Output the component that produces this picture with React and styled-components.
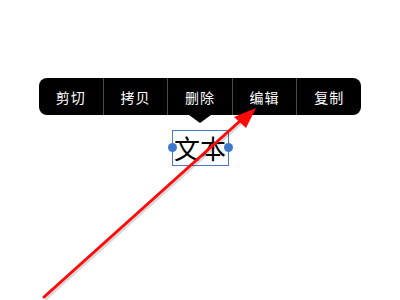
import React from 'react'
import styled, { createGlobalStyle } from 'styled-components'

const Global = createGlobalStyle`
  html, body { margin: 0; padding: 0; background: #fff; }
  body { font-family: "Noto Sans CJK SC", "Noto Sans", sans-serif; }
`

const Page = styled.div`
  position: relative;
  width: 400px;
  height: 300px;
  overflow: hidden;
  display: flex;
  flex-direction: column;
  align-items: center;
  padding-top: 78px;
  box-sizing: border-box;
`

const Menu = styled.div`
  position: relative;
  display: flex;
  width: 322px;
  height: 37px;
  background: #000;
  border-radius: 8px;
  &::after {
    content: "";
    position: absolute;
    left: 50%;
    bottom: -8px;
    margin-left: -11px;
    border-left: 11px solid transparent;
    border-right: 11px solid transparent;
    border-top: 8px solid #000;
  }
`

const Item = styled.div`
  flex: 1;
  display: flex;
  align-items: center;
  justify-content: center;
  color: #fff;
  font-size: 14px;
  letter-spacing: 1px;
  border-left: ${p => (p.first ? 'none' : '1px solid #4a4a4a')};
`

const Selection = styled.div`
  position: relative;
  margin-top: 15px;
  width: 55px;
  height: 34px;
  border: 1px solid #4a78c4;
  display: flex;
  align-items: center;
  justify-content: center;
  font-size: 26px;
  font-weight: 400;
  line-height: 1;
  color: #000;
`

const Handle = styled.span`
  position: absolute;
  top: 50%;
  ${p => (p.side === 'left' ? 'left: -5px;' : 'right: -5px;')}
  width: 9px;
  height: 9px;
  margin-top: -5px;
  border-radius: 50%;
  background: #3d78cc;
`

const Overlay = styled.svg`
  position: absolute;
  left: 0;
  top: 0;
  pointer-events: none;
`

const items = ['剪切', '拷贝', '删除', '编辑', '复制']

export default function App() {
  return (
    <>
      <Global />
      <Page>
        <Menu>
          {items.map((t, i) => (
            <Item key={t} first={i === 0}>{t}</Item>
          ))}
        </Menu>
        <Selection>
          <Handle side="left" />
          文本
          <Handle side="right" />
        </Selection>
        <Overlay width="400" height="300" viewBox="0 0 400 300">
          <line x1="44" y1="298" x2="240" y2="122" stroke="rgba(0,0,0,0.15)" strokeWidth="3" transform="translate(1,1.5)" />
          <line x1="44" y1="297" x2="240" y2="121" stroke="#ff0a0a" strokeWidth="3" strokeLinecap="round" />
          <polygon points="256,108 234,117 246,128" fill="#ff0a0a" />
        </Overlay>
      </Page>
    </>
  )
}
